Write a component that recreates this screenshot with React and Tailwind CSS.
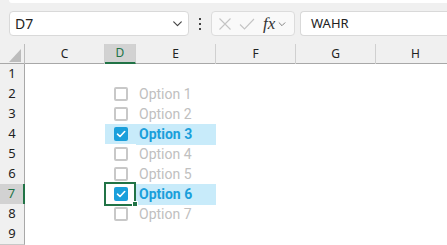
import React from 'react';

const options = [
  { row: 2, label: 'Option 1', checked: false },
  { row: 3, label: 'Option 2', checked: false },
  { row: 4, label: 'Option 3', checked: true },
  { row: 5, label: 'Option 4', checked: false },
  { row: 6, label: 'Option 5', checked: false },
  { row: 7, label: 'Option 6', checked: true },
  { row: 8, label: 'Option 7', checked: false },
];

const Checkbox = ({ checked }) =>
  checked ? (
    <div className="w-[14px] h-[14px] rounded-[2px] bg-[#1a9fdb] flex items-center justify-center">
      <svg width="10" height="8" viewBox="0 0 10 8" fill="none">
        <path d="M1.5 4.2 L4 6.5 L8.7 1.5" stroke="white" strokeWidth="1.6" strokeLinecap="round" strokeLinejoin="round" />
      </svg>
    </div>
  ) : (
    <div className="w-[14px] h-[14px] rounded-[2px] border-2 border-[#c8c8c8] bg-white" />
  );

const ChevronDown = ({ size = 12, color = '#444' }) => (
  <svg width={size} height={size} viewBox="0 0 12 12" fill="none">
    <path d="M2.5 4.5 L6 8 L9.5 4.5" stroke={color} strokeWidth="1.1" strokeLinecap="round" strokeLinejoin="round" />
  </svg>
);

const cols = ['C', 'D', 'E', 'F', 'G', 'H'];

const App = () => {
  return (
    <div className="w-[447px] h-[245px] overflow-hidden bg-white font-['Noto_Sans',sans-serif]">
      {/* Formula bar */}
      <div className="h-[44px] bg-[#f0f0f0] flex flex-col">
        <div className="h-[3px] ml-[9px] bg-white rounded-bl-[4px]" />
        <div className="mt-[8px] h-[25px] flex pl-[9px]">
          <div className="w-[180px] h-full bg-white border border-[#d9d9d9] rounded-[4px] flex items-center justify-between pl-[5px] pr-[4px]">
            <span className="text-[14px] text-[#222] leading-none">D7</span>
            <ChevronDown size={13} />
          </div>
          <div className="w-[22px] flex flex-col items-center justify-center gap-[3px]">
            <div className="w-[2px] h-[2px] bg-[#444]" />
            <div className="w-[2px] h-[2px] bg-[#444]" />
            <div className="w-[2px] h-[2px] bg-[#444]" />
          </div>
          <div className="w-[84px] h-full bg-[#f9f9f9] border border-[#dcdcdc] rounded-[4px] flex items-center pl-[6px]">
            <svg width="14" height="14" viewBox="0 0 14 14" fill="none">
              <path d="M1.5 1.5 L12.5 12.5 M12.5 1.5 L1.5 12.5" stroke="#c4c4c4" strokeWidth="1.1" />
            </svg>
            <svg width="16" height="14" viewBox="0 0 16 14" fill="none" className="ml-[7px]">
              <path d="M1 7.5 L5.5 12 L15 2" stroke="#c4c4c4" strokeWidth="1.1" />
            </svg>
            <span className="ml-[8px] font-['Liberation_Serif',serif] italic text-[17px] text-[#333] leading-none">fx</span>
            <span className="ml-[2px]"><ChevronDown size={10} color="#777" /></span>
          </div>
          <div className="ml-[5px] flex-1 h-full bg-white border border-[#d9d9d9] border-r-0 rounded-l-[4px] flex items-center pl-[10px]">
            <span className="text-[13px] text-[#222] leading-none">WAHR</span>
          </div>
        </div>
      </div>

      {/* Column headers */}
      <div className="grid grid-cols-[25px_80px_31px_80px_80px_80px_80px] h-[20px] bg-[#f0f0f0] border-b border-[#a8a8a8]">
        <div className="border-r border-[#bdbdbd] flex items-end justify-end pr-[3px] pb-[2px]">
          <svg width="12" height="13" viewBox="0 0 12 13">
            <path d="M12 0 L12 13 L0 13 Z" fill="#bcbcbc" />
          </svg>
        </div>
        {cols.map((c) =>
          c === 'D' ? (
            <div key={c} className="bg-[#d2d2d2] border-b-2 border-[#217346] border-r border-r-[#d0d0d0] flex items-center justify-center text-[12px] text-[#217346]">
              {c}
            </div>
          ) : (
            <div key={c} className="border-r border-[#d0d0d0] flex items-center justify-center text-[12px] text-[#222]">
              {c}
            </div>
          )
        )}
      </div>

      {/* Rows */}
      {Array.from({ length: 9 }, (_, i) => i + 1).map((r) => {
        const opt = options.find((o) => o.row === r);
        const active = r === 7;
        const hl = opt && opt.checked;
        return (
          <div key={r} className="grid grid-cols-[25px_80px_31px_80px_80px_80px_80px] h-[20px]">
            {active ? (
              <div className="bg-[#d2d2d2] border-b border-[#c8c8c8] border-r-2 border-r-[#217346] flex items-center justify-center text-[13px] text-[#217346]">
                {r}
              </div>
            ) : (
              <div className="bg-[#f0f0f0] border-b border-[#c8c8c8] border-r border-r-[#a8a8a8] flex items-center justify-center text-[13px] text-[#222]">
                {r}
              </div>
            )}
            <div />
            <div className={`relative flex justify-center pt-[3px] pl-[1px] ${hl && !active ? 'bg-[#c8ebfa]' : 'bg-white'}`}>
              {opt && <Checkbox checked={opt.checked} />}
              {active && (
                <>
                  <div className="absolute z-10 left-[-1px] top-[-2px] right-0 bottom-[-1px] border-2 border-[#217346]" />
                  <div className="absolute z-20 left-[27px] top-[17px] w-[6px] h-[6px] bg-[#217346] border border-white" />
                </>
              )}
            </div>
            <div className={`flex items-center pl-[3px] text-[14px] font-['Roboto',sans-serif] ${hl ? 'bg-[#c8ebfa] font-bold text-[#1a9fdb]' : 'text-[#c0c0c0]'}`}>
              {opt ? opt.label : ''}
            </div>
            <div />
            <div />
            <div />
          </div>
        );
      })}
    </div>
  );
};

export default App;
